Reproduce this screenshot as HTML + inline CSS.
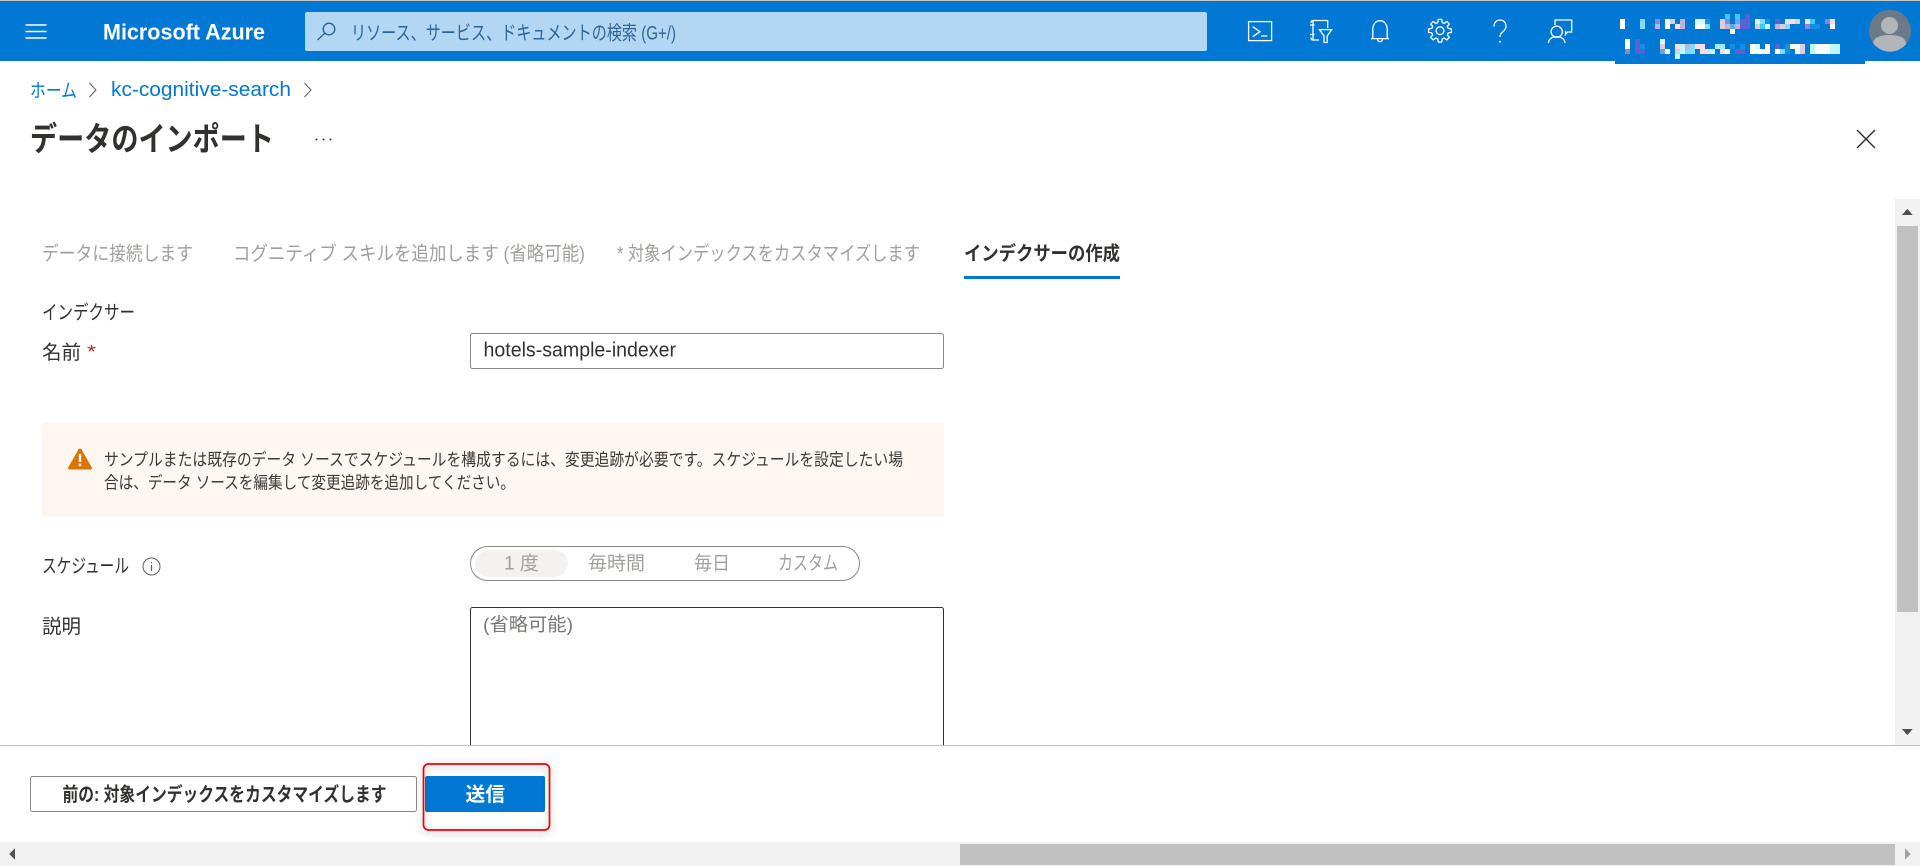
<!DOCTYPE html>
<html lang="ja">
<head>
<meta charset="utf-8">
<title>データのインポート - Microsoft Azure</title>
<style>
html,body{margin:0;padding:0;background:#fff;width:1920px;height:866px;overflow:hidden}
svg{display:block}
text{font-family:"Liberation Sans","Noto Sans CJK JP",sans-serif;white-space:pre}
.b{font-weight:700}
</style>
</head>
<body>
<svg xmlns="http://www.w3.org/2000/svg" width="1920" height="866" viewBox="0 0 1920 866">
<rect width="1920" height="866" fill="#fff"/>

<!-- top bar -->
<rect width="1920" height="1" fill="#c8c8c8"/>
<rect y="1" width="1920" height="60" fill="#0078d4"/>
<rect x="1615" y="61" width="250" height="3" fill="#0078d4"/>
<g stroke="#fff" stroke-width="1.4" fill="none">
<path d="M25.500 25h21M25.500 31.500h21M25.500 38h21"/>
</g>
<text x="103" y="39.500" font-size="22" class="b" fill="#fff" textLength="162" lengthAdjust="spacingAndGlyphs">Microsoft Azure</text>
<rect x="305" y="12" width="902" height="39" rx="2" fill="#b3d7f2"/>
<g fill="none" stroke="#1f5f94" stroke-width="1.3">
<circle cx="329" cy="29" r="5.800"/>
<path d="M324.800 33.200L317.500 40"/>
</g>
<text x="351" y="39.500" font-size="19.500" fill="#2d6496" textLength="325" lengthAdjust="spacingAndGlyphs">リソース、サービス、ドキュメントの検索 (G+/)</text>

<!-- top-right icons -->
<g fill="none" stroke="#fff" stroke-width="1.3">
<rect x="1248.600" y="21.600" width="23" height="19"/>
<path d="M1252.700 26.700l7.300 5-7.300 5M1261 36h6.300"/>
<path d="M1327.700 28V20.500H1313V40h6M1310 25h4.500M1310 34.500h4.500M1313 20.500c-1.500 0-2 1-2 2.500M1313 40c-1.500 0-2-1-2-2.500"/>
<path d="M1319.500 29.600h12.200l-4.500 6.400v6.500h-3.200V36z"/>
<path d="M1372.800 38.300V29.300c0-5 3.200-8.600 7.200-8.600s7.200 3.600 7.200 8.600v9M1371 38.600h18M1377.500 39c0 3.500 5 3.500 5 0"/>
<g transform="translate(1440 30.700)">
<path stroke-linejoin="round" d="M8.210-2.200L11.360-1.800 11.360 1.800 8.210 2.200 7.360 4.250 9.300 6.760 6.760 9.300 4.250 7.360 2.200 8.210 1.800 11.360-1.800 11.360-2.200 8.210-4.250 7.360-6.760 9.300-9.300 6.760-7.360 4.250-8.210 2.200-11.360 1.800-11.360-1.800-8.210-2.200-7.360-4.250-9.300-6.760-6.760-9.300-4.250-7.360-2.200-8.210-1.800-11.360 1.800-11.360 2.200-8.210 4.250-7.360 6.760-9.300 9.300-6.760 7.360-4.250z"/>
<circle r="3.900"/>
</g>
<path d="M1494 26.500c0-4 2.700-6.500 6-6.500s6 2.500 6 6c0 3-1.700 4.500-3.500 6-1.800 1.500-2.500 2.700-2.500 5"/>
<path d="M1555 25v-5h16.700v12h-4.200l-2 2.500v-3.800"/>
<circle cx="1556.700" cy="31.700" r="5.600"/>
<path d="M1548.500 43c0-4 3.500-6.300 8.200-6.300s8.200 2.300 8.200 6.300"/>
</g>
<circle cx="1500" cy="41.800" r="1" fill="#fff"/>

<!-- pixelated account name -->
<g shape-rendering="crispEdges">
<path fill="#fff" d="M1620 19h5v10h-5zM1665 19h5v10h-5zM1695 24h10v5h-10zM1730 29h5v5h-5zM1625 39h5v10h-5zM1665 49h5v5h-5zM1725 49h5v5h-5zM1750 44h5v10h-5zM1755 49h5v5h-5zM1760 49h5v5h-5zM1765 44h5v10h-5zM1775 49h5v5h-5zM1790 44h10v5h-10zM1795 49h5v5h-5zM1815 44h15v10h-15zM1830 24h5v5h-5z"/>
<path fill="#7fdcff" d="M1640 19h5v10h-5zM1705 24h5v5h-5zM1685 49h10v5h-10zM1690 44h5v5h-5zM1785 24h5v5h-5zM1760 19h5v5h-5zM1780 49h5v5h-5z"/>
<path fill="#d8f8ff" d="M1695 19h10v5h-10zM1660 39h5v5h-5zM1755 44h5v5h-5zM1755 19h5v5h-5z"/>
<path fill="#c0f6ff" d="M1675 54h5v5h-5zM1680 44h5v10h-5zM1710 49h5v5h-5zM1765 24h5v5h-5zM1810 44h5v10h-5zM1835 44h5v10h-5zM1830 44h5v10h-5z"/>
<path fill="#a0ecff" d="M1715 44h10v5h-10z"/>
<path fill="#8a86d8" d="M1655 19h5v5h-5zM1725 19h5v5h-5zM1625 49h5v5h-5zM1825 19h5v5h-5zM1805 24h5v5h-5z"/>
<path fill="#bcb4dc" d="M1655 24h5v5h-5zM1725 24h5v5h-5zM1680 19h5v10h-5zM1735 24h5v5h-5zM1775 24h5v5h-5zM1685 44h5v5h-5z"/>
<path fill="#f8dce8" d="M1675 24h5v5h-5zM1675 44h5v5h-5zM1695 44h10v5h-10zM1700 49h10v5h-10zM1785 19h10v5h-10zM1805 19h5v5h-5zM1830 19h5v5h-5zM1720 49h5v5h-5z"/>
<path fill="#d8d0e0" d="M1670 19h5v5h-5zM1720 19h5v10h-5zM1660 44h5v5h-5zM1675 49h5v5h-5zM1755 24h5v5h-5zM1780 24h5v5h-5zM1795 19h5v5h-5zM1800 44h5v10h-5z"/>
<path fill="#5a62d2" d="M1745 14h5v15h-5zM1740 19h5v10h-5zM1635 39h5v15h-5zM1640 49h5v5h-5zM1740 49h5v5h-5zM1775 19h5v5h-5zM1775 44h5v5h-5zM1735 49h5v5h-5z"/>
<path fill="#40c8f0" d="M1725 14h5v5h-5zM1735 14h5v5h-5zM1760 24h5v5h-5zM1810 19h5v5h-5z"/>
<path fill="#1090e8" d="M1640 44h5v5h-5zM1705 19h5v5h-5zM1730 44h5v5h-5zM1740 44h5v5h-5zM1785 44h5v10h-5zM1765 19h5v5h-5zM1810 24h10v5h-10z"/>
<path fill="#60a8e0" d="M1660 49h5v5h-5zM1730 24h5v5h-5zM1735 19h5v5h-5z"/>
</g>

<!-- avatar -->
<defs><clipPath id="av"><circle cx="1890" cy="30.700" r="21"/></clipPath></defs>
<circle cx="1890" cy="30.700" r="21" fill="#6b7a89"/>
<g clip-path="url(#av)" fill="#b1b4b8">
<circle cx="1889.500" cy="25.500" r="8.500"/>
<path d="M1873 52V44c0-6 6-9 16.500-9s16.500 3 16.500 9v8z"/>
</g>

<!-- breadcrumb -->
<text x="30" y="97" font-size="19" fill="#0078d4" textLength="47" lengthAdjust="spacingAndGlyphs">ホーム</text>
<path d="M89.500 83l6.500 7-6.500 7M304.500 83l6.500 7-6.500 7" fill="none" stroke="#605e5c" stroke-width="1"/>
<text x="111" y="96" font-size="20" fill="#0078d4" textLength="180" lengthAdjust="spacingAndGlyphs">kc-cognitive-search</text>

<!-- title -->
<text x="30" y="150.500" font-size="33" class="b" fill="#323130" textLength="244" lengthAdjust="spacingAndGlyphs">データのインポート</text>
<g fill="#323130"><circle cx="316.500" cy="139.500" r="1"/><circle cx="323.500" cy="139.500" r="1"/><circle cx="330.500" cy="139.500" r="1"/></g>
<path d="M1857 130l18 18M1875 130l-18 18" stroke="#252423" stroke-width="1.300" fill="none"/>

<!-- vertical scrollbar -->
<rect x="1895" y="199" width="25" height="546" fill="#f1f1f1"/>
<rect x="1897" y="226" width="21" height="386" fill="#c1c1c1"/>
<path d="M1907.300 209l5.500 6h-11zM1907.300 735l-5.500-6h11z" fill="#505050" shape-rendering="crispEdges"/>

<!-- tabs -->
<text x="42" y="260" font-size="19.500" fill="#a19f9d" textLength="151" lengthAdjust="spacingAndGlyphs">データに接続します</text>
<text x="233" y="260" font-size="19.500" fill="#a19f9d" textLength="352" lengthAdjust="spacingAndGlyphs">コグニティブ スキルを追加します (省略可能)</text>
<text x="617" y="260" font-size="19.500" fill="#a19f9d" textLength="303" lengthAdjust="spacingAndGlyphs">* 対象インデックスをカスタマイズします</text>
<text x="964" y="260" font-size="19.500" class="b" fill="#323130" textLength="156" lengthAdjust="spacingAndGlyphs">インデクサーの作成</text>
<rect x="964" y="276" width="156" height="3" fill="#0078d4"/>

<!-- form -->
<text x="42" y="319" font-size="19.500" fill="#323130" textLength="93" lengthAdjust="spacingAndGlyphs">インデクサー</text>
<text x="42" y="359" font-size="19.500" fill="#323130" textLength="39" lengthAdjust="spacingAndGlyphs">名前</text>
<text x="87" y="358" font-size="18" fill="#a4262c" textLength="9" lengthAdjust="spacingAndGlyphs">*</text>
<rect x="470.500" y="333.500" width="473" height="35" rx="2" fill="#fff" stroke="#8a8886"/>
<text x="483.500" y="356.500" font-size="20" fill="#323130" textLength="192.500" lengthAdjust="spacingAndGlyphs">hotels-sample-indexer</text>

<!-- warning -->
<rect x="42" y="422" width="902" height="94.700" rx="2" fill="#fef7f1"/>
<path d="M80 448.500c.8 0 1.300.4 1.700 1.200l10 17.500c.7 1.200.1 2.300-1.300 2.300H69.600c-1.400 0-2-1.100-1.300-2.300l10-17.500c.4-.8.900-1.200 1.700-1.200z" fill="#db7500"/>
<rect x="78.800" y="454" width="2.400" height="8" fill="#fff"/>
<rect x="78.800" y="463.700" width="2.400" height="2.500" fill="#fff"/>
<text x="104" y="465.500" font-size="17" fill="#3b3a39" textLength="799" lengthAdjust="spacingAndGlyphs">サンプルまたは既存のデータ ソースでスケジュールを構成するには、変更追跡が必要です。スケジュールを設定したい場</text>
<text x="104" y="488.500" font-size="17" fill="#3b3a39" textLength="411" lengthAdjust="spacingAndGlyphs">合は、データ ソースを編集して変更追跡を追加してください。</text>

<!-- schedule -->
<text x="42" y="572.500" font-size="19.500" fill="#323130" textLength="87" lengthAdjust="spacingAndGlyphs">スケジュール</text>
<circle cx="151.500" cy="566.500" r="8.500" fill="none" stroke="#605e5c" stroke-width="1"/>
<rect x="150.900" y="565" width="1.200" height="6" fill="#605e5c"/>
<rect x="150.900" y="562" width="1.200" height="1.300" fill="#605e5c"/>
<rect x="470.500" y="546.500" width="389" height="34" rx="17" fill="#fff" stroke="#8a8886"/>
<rect x="475" y="550" width="93" height="27" rx="13.500" fill="#f3f2f1"/>
<text x="504" y="569.500" font-size="19" fill="#a19f9d" textLength="35" lengthAdjust="spacingAndGlyphs">1 度</text>
<text x="588" y="569.500" font-size="19" fill="#a19f9d" textLength="57" lengthAdjust="spacingAndGlyphs">毎時間</text>
<text x="694" y="569.500" font-size="19" fill="#a19f9d" textLength="36" lengthAdjust="spacingAndGlyphs">毎日</text>
<text x="778" y="569.500" font-size="19.500" fill="#a19f9d" textLength="60" lengthAdjust="spacingAndGlyphs">カスタム</text>

<text x="42" y="633" font-size="19.500" fill="#323130" textLength="39" lengthAdjust="spacingAndGlyphs">説明</text>
<path d="M470.500 745V609.500a2 2 0 0 1 2-2H941.500a2 2 0 0 1 2 2V745" fill="#fff" stroke="#323130"/>
<text x="483" y="631" font-size="18.500" fill="#797775" textLength="90" lengthAdjust="spacingAndGlyphs">(省略可能)</text>

<!-- footer -->
<rect y="745" width="1920" height="97" fill="#fff"/>
<rect y="745" width="1920" height="1" fill="#c0c0c0"/>
<rect x="30.500" y="776.500" width="386" height="35" rx="2" fill="#fff" stroke="#8a8886"/>
<text x="62.500" y="801" font-size="19.500" class="b" fill="#323130" textLength="324" lengthAdjust="spacingAndGlyphs">前の: 対象インデックスをカスタマイズします</text>
<rect x="425" y="776" width="120" height="36" rx="2" fill="#0078d4"/>
<text x="465.500" y="801" font-size="19.500" class="b" fill="#fff" textLength="39.500" lengthAdjust="spacingAndGlyphs">送信</text>
<rect x="423.500" y="764" width="126" height="66" rx="5" fill="none" stroke="#f00000" stroke-width="1.700" style="filter:drop-shadow(0 2px 4px rgba(0,0,0,.35))"/>

<!-- horizontal scrollbar -->
<rect y="842" width="1920" height="24" fill="#f1f1f1"/>
<rect x="960" y="844" width="935" height="21" fill="#c1c1c1"/>
<path d="M9 854l6-5.500v11z" fill="#505050" shape-rendering="crispEdges"/>
<path d="M1911 854l-6-5.500v11z" fill="#a3a3a3" shape-rendering="crispEdges"/>
</svg>
</body>
</html>
